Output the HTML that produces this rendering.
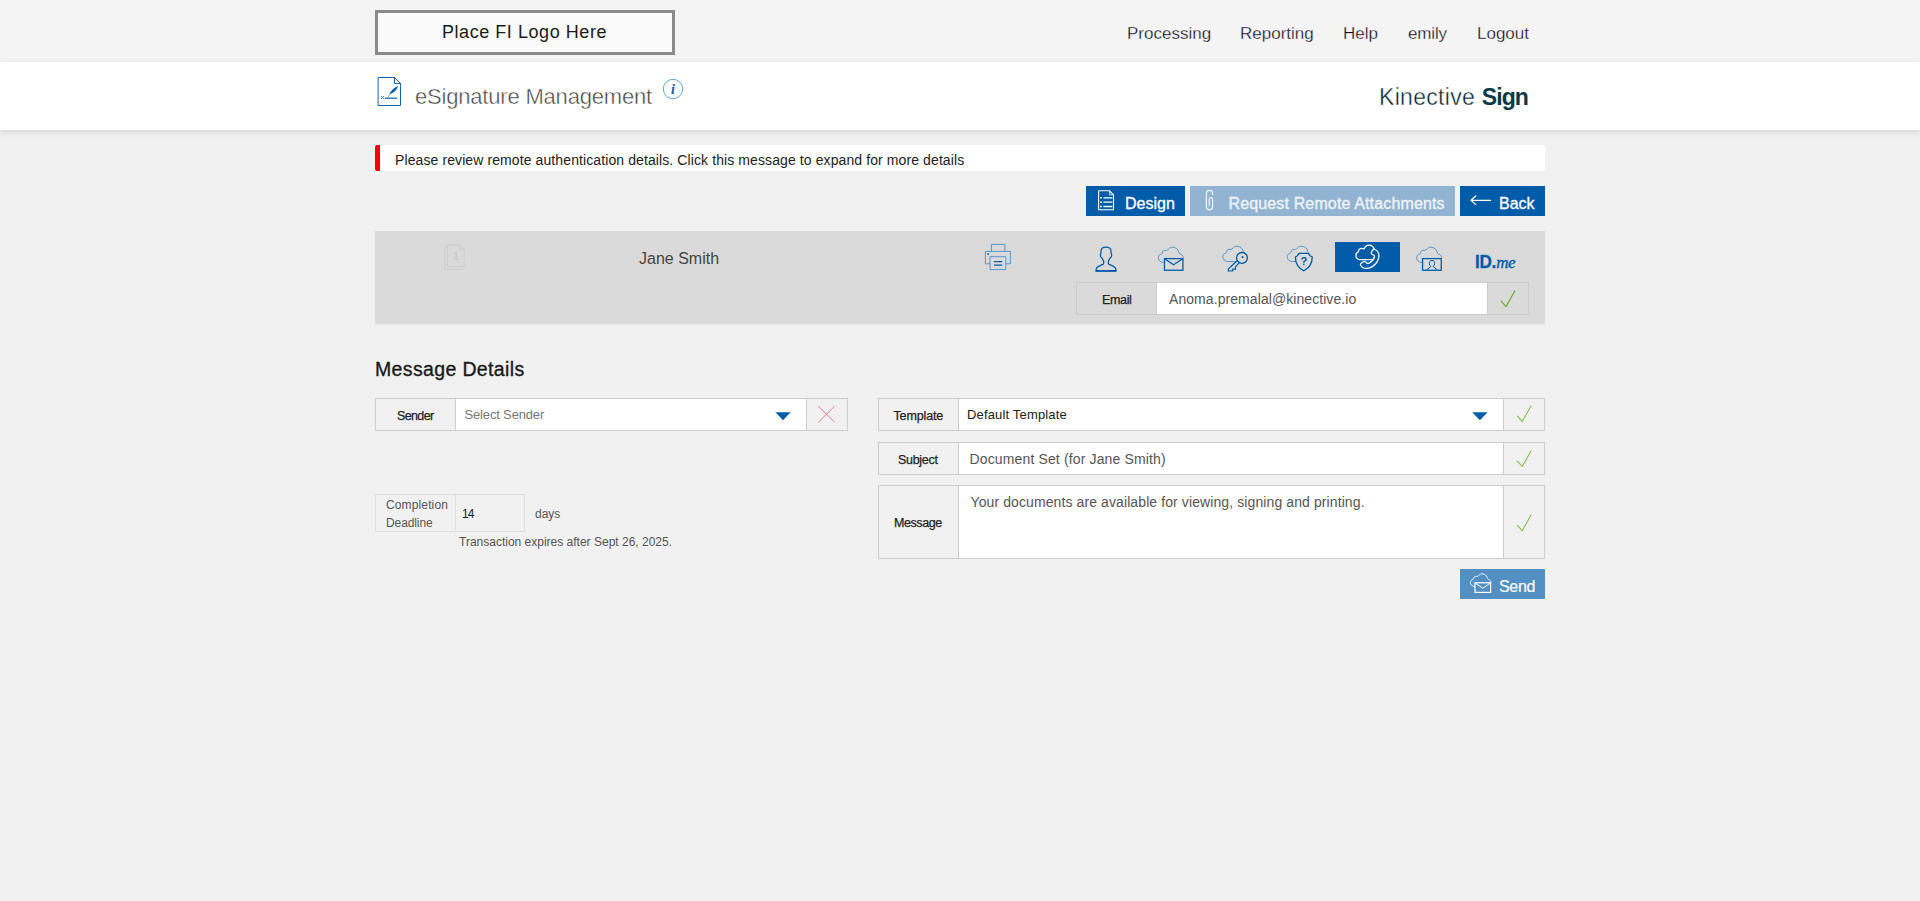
<!DOCTYPE html>
<html lang="en">
<head>
<meta charset="utf-8">
<title>eSignature Management</title>
<style>
*{box-sizing:border-box;margin:0;padding:0}
html,body{width:1920px;height:901px;overflow:hidden}
body{background:#f1f1f1;font-family:"Liberation Sans",Arial,sans-serif;color:#222;position:relative}
.t{position:absolute;white-space:nowrap;line-height:1}
svg{position:absolute;overflow:visible}
#topbar{position:absolute;left:0;top:0;width:1920px;height:62px;background:#f4f4f4}
#logo{position:absolute;left:375px;top:10px;width:300px;height:45px;border:3px solid #8a8a8a;background:#fafafa}
.nav{font-size:17px;color:#0e0616;top:24.6px;-webkit-text-stroke:.3px #f4f4f4}
#band{position:absolute;left:0;top:62px;width:1920px;height:68px;background:#fff;box-shadow:0 2px 6px rgba(0,0,0,.12)}
#alert{position:absolute;left:375px;top:145px;width:1170px;height:26px;background:#fff;border-left:5px solid #f00;border-radius:2px}
.btn{position:absolute;height:30px;background:#005ca8}
.btn.dis{background:#92b4d2}
.bt{font-size:16px;color:#fff;-webkit-text-stroke:.3px #fff}
#panel{position:absolute;left:375px;top:231px;width:1170px;height:92px;background:#dadada;box-shadow:0 1px 0 #dedede,0 2px 0 #e9e9e9}
.box{position:absolute;border:1px solid #ccc;background:#f1f1f1}
.box.w{background:#fff}
.lb{font-size:12.5px;color:#222;-webkit-text-stroke:.25px #222}
.v14{font-size:14px;color:#555}
</style>
</head>
<body>
<!-- top bar -->
<div id="topbar"></div>
<div id="logo"></div>
<div class="t" id="t_logo" style="left:442px;top:23.4px;font-size:18px;color:#1a1a1a;letter-spacing:.55px">Place FI Logo Here</div>
<div class="t nav" id="t_proc" style="left:1127px">Processing</div>
<div class="t nav" id="t_rep" style="left:1240px">Reporting</div>
<div class="t nav" id="t_help" style="left:1343px">Help</div>
<div class="t nav" id="t_emily" style="left:1408px;letter-spacing:-.15px">emily</div>
<div class="t nav" id="t_logout" style="left:1477px">Logout</div>

<!-- title band -->
<div id="band"></div>
<div class="t" id="t_title" style="left:415px;top:86px;font-size:22px;color:#404040;-webkit-text-stroke:.45px #fff;letter-spacing:-.19px">eSignature Management</div>
<svg id="i_info" style="left:662px;top:78px" width="22" height="22" viewBox="0 0 22 22"><circle cx="11" cy="11" r="9.7" fill="none" stroke="#3f8fd0" stroke-width=".8"/><text x="11" y="16" text-anchor="middle" font-family="Liberation Serif,serif" font-style="italic" font-weight="bold" font-size="14" fill="#005ca8">i</text></svg>
<div class="t" id="t_brand" style="left:1379px;top:86px;font-size:23px;color:#0b3a45;letter-spacing:.3px"><span style="color:#00202a;-webkit-text-stroke:.4px #fff">Kinective</span> <b id="t_sign" style="letter-spacing:-.9px">Sign</b></div>

<!-- alert -->
<div id="alert"></div>
<div class="t" id="t_alert" style="left:395px;top:153px;font-size:14px;color:#222;letter-spacing:.1px">Please review remote authentication details. Click this message to expand for more details</div>

<!-- buttons -->
<div class="btn" style="left:1086px;top:186px;width:99px"></div>
<div class="t bt" id="t_design" style="left:1125px;top:195.5px">Design</div>
<div class="btn dis" style="left:1190px;top:186px;width:265px"></div>
<div class="t bt" id="t_req" style="left:1228.5px;top:195.5px;color:#f1f4f8;-webkit-text-stroke-color:#f1f4f8;letter-spacing:.14px">Request Remote Attachments</div>
<div class="btn" style="left:1460px;top:186px;width:85px"></div>
<div class="t bt" id="t_back" style="left:1499px;top:195.5px">Back</div>

<!-- signer panel -->
<div id="panel"></div>
<div class="t" id="t_jane" style="left:639px;top:251px;font-size:16px;color:#444">Jane Smith</div>
<div class="btn" style="left:1335px;top:242px;width:65px"></div>
<div class="t" id="t_idme" style="left:1475.4px;top:251.6px;font-size:19px;color:#005ca8;width:60px"><b style="display:inline-block;transform:scaleX(.9);transform-origin:0 50%;letter-spacing:-.4px;-webkit-text-stroke:.3px #005ca8">ID.</b><i style="font-family:'Liberation Serif',serif;font-size:17px;letter-spacing:-.5px;-webkit-text-stroke:.35px #005ca8;margin-left:-2.3px">me</i></div>

<div class="box" style="left:1076px;top:282px;width:82px;height:33px;background:#dadada"></div>
<div class="box w" style="left:1156px;top:282px;width:332px;height:33px"></div>
<div class="box" style="left:1487px;top:282px;width:42px;height:33px;background:#dadada"></div>
<div class="t lb" id="t_email" style="left:1102px;top:293.5px;letter-spacing:-.35px">Email</div>
<div class="t v14" id="t_emailv" style="left:1169px;top:292px;letter-spacing:.07px">Anoma.premalal@kinective.io</div>

<!-- message details -->
<div class="t" id="t_md" style="left:375px;top:360px;font-size:19.5px;color:#1a1a1a;-webkit-text-stroke:.35px #1a1a1a;letter-spacing:.36px">Message Details</div>

<div class="box" style="left:375px;top:398px;width:82px;height:33px"></div>
<div class="box w" style="left:455px;top:398px;width:352px;height:33px"></div>
<div class="box" style="left:806px;top:398px;width:42px;height:33px"></div>
<div class="t lb" id="t_sender" style="left:397px;top:409.5px;letter-spacing:-.64px">Sender</div>
<div class="t" id="t_selsender" style="left:464.5px;top:408px;font-size:13px;color:#777;letter-spacing:-.16px">Select Sender</div>

<div class="box" style="left:878px;top:398px;width:82px;height:33px"></div>
<div class="box w" style="left:958px;top:398px;width:546px;height:33px"></div>
<div class="box" style="left:1503px;top:398px;width:42px;height:33px"></div>
<div class="t lb" id="t_tmpl" style="left:893.5px;top:409.5px;letter-spacing:-.14px">Template</div>
<div class="t" id="t_deft" style="left:967px;top:408px;font-size:13px;color:#222;letter-spacing:.16px">Default Template</div>

<div class="box" style="left:878px;top:442px;width:82px;height:33px"></div>
<div class="box w" style="left:958px;top:442px;width:546px;height:33px"></div>
<div class="box" style="left:1503px;top:442px;width:42px;height:33px"></div>
<div class="t lb" id="t_subj" style="left:898px;top:453.5px;letter-spacing:-.3px">Subject</div>
<div class="t v14" id="t_subjv" style="left:969.5px;top:452px;letter-spacing:.14px">Document Set (for Jane Smith)</div>

<div class="box" style="left:878px;top:485px;width:82px;height:74px"></div>
<div class="box w" style="left:958px;top:485px;width:546px;height:74px"></div>
<div class="box" style="left:1503px;top:485px;width:42px;height:74px"></div>
<div class="t lb" id="t_msg" style="left:894px;top:516.5px;letter-spacing:-.43px">Message</div>
<div class="t v14" id="t_msgv" style="left:970.5px;top:495px;letter-spacing:.1px">Your documents are available for viewing, signing and printing.</div>

<div class="box" style="left:375px;top:494px;width:82px;height:38px;border-color:#dedede"></div>
<div class="box" style="left:455px;top:494px;width:70px;height:38px;border-color:#dedede"></div>
<div class="t" id="t_comp" style="left:386px;top:499px;font-size:12px;color:#555;letter-spacing:.13px">Completion</div>
<div class="t" id="t_dead" style="left:386px;top:517px;font-size:12px;color:#555;letter-spacing:-.1px">Deadline</div>
<div class="t" id="t_14" style="left:462px;top:508px;font-size:12px;color:#222;letter-spacing:-1px">14</div>
<div class="t" id="t_days" style="left:535px;top:508px;font-size:12px;color:#555">days</div>
<div class="t" id="t_trans" style="left:459px;top:536px;font-size:12px;color:#555">Transaction expires after Sept 26, 2025.</div>

<div class="btn" style="left:1460px;top:569px;width:85px;background:#5290c3"></div>
<div class="t bt" id="t_send" style="left:1499px;top:578.5px;-webkit-text-stroke-width:.15px;letter-spacing:-.3px">Send</div>

<!--ICONS-START-->
<svg id="icons" style="left:0;top:0" width="1920" height="901" viewBox="0 0 1920 901" fill="none" stroke-linecap="round" stroke-linejoin="round">
<defs>
<path id="cloud" d="M5.2,16.5 C2.4,16.3 .4,14.4 .4,11.9 C.4,9.8 1.8,8.3 3.6,7.9 C4.3,7.7 4.4,7.2 4.4,6.6 C4.4,5.2 5.4,4.4 6.6,4.4 H8.6 C9.4,4.4 9.8,3.8 10.6,3 C11.6,1.9 13,1.2 14.5,1.2 C17.6,1.2 20.2,3.2 20.7,6 C20.8,6.8 21,7.3 21.8,7.7 C23.6,8.5 25,9.6 25.4,11.1"/>
<path id="cloudb" d="M12,16.5 H5.2 C2.4,16.3 .4,14.4 .4,11.9 C.4,9.8 1.8,8.3 3.6,7.9 C4.3,7.7 4.4,7.2 4.4,6.6 C4.4,5.2 5.4,4.4 6.6,4.4 H8.6 C9.4,4.4 9.8,3.8 10.6,3 C11.6,1.9 13,1.2 14.5,1.2 C17.6,1.2 20.2,3.2 20.7,6 C20.8,6.8 21,7.3 21.8,7.7"/>
<path id="chk" d="M0,10.2 L4.8,15.6 L13.6,0"/>
</defs>
<!-- title doc icon -->
<g stroke="#1565b5" stroke-width="1" stroke-linejoin="miter">
<path d="M378.5,77.5 H394.5 L400.5,83.5 V105.5 H378.5 Z" fill="#fff"/>
<path d="M394.5,77.5 V83.5 H400.5"/>
</g>
<path d="M389.6,94.4 C390.2,91.6 393.6,88 398,86.1 C397,89.8 393.4,93.4 389.6,94.4 Z" fill="#005ca8"/>
<path d="M388.2,96.9 L390,94" stroke="#2f7ec4" stroke-width=".6"/>
<path d="M385,98.2 H397" stroke="#005ca8" stroke-width="1.2" stroke-linecap="butt"/>
<path d="M381.2,96.3 l2.6,2.4 m0,-2.4 l-2.6,2.4" stroke="#1565b5" stroke-width=".8"/>

<!-- design icon -->
<g stroke="#fff" stroke-width="1.1">
<path d="M1098.6,190.8 H1109.6 L1113.5,194.8 V209.8 H1098.6 Z"/>
<path d="M1109.6,190.8 V194.8 H1113.5" stroke-width=".8"/>
<path d="M1103.4,197.8 H1112.4 M1103.4,202.2 H1112.4 M1103.4,206.5 H1112.4" stroke-width="1.3" stroke-linecap="butt"/>
<path d="M1100.1,197.8 H1101.9 M1100.1,202.2 H1101.9 M1100.1,206.5 H1101.9" stroke-width="1.6" stroke-linecap="butt"/>
</g>
<!-- paperclip -->
<path d="M1212.6,194.6 V193.4 C1212.6,189.3 1206.4,189.3 1206.4,193.4 V206.8 C1206.4,210.9 1212.6,210.9 1212.6,206.8 V199.4 C1212.6,197 1209.2,197 1209.2,199.4 V205.6" stroke="#f2f5f8" stroke-width="1.2"/>
<!-- back arrow -->
<path d="M1471,200.3 H1490.6 M1475.8,196 L1471,200.3 L1475.8,204.6" stroke="#fff" stroke-width="1.2"/>

<!-- ghost docs -->
<g stroke="#cdcdcd" stroke-width="1">
<path d="M447.5,247.5 H444.9 V269.3 H462.2 V266.7"/>
<path d="M447.9,244.9 H459.6 L464.3,249.6 V266.4 H447.9 Z"/>
<path d="M459.6,244.9 V249.6 H464.3"/>
</g>
<!-- printer -->
<g stroke="#3a86c8" stroke-width=".8">
<path d="M991.4,251.3 V244.4 H1004.9 V251.3"/>
<path d="M990.4,263.8 H985.4 V251.4 H1010.4 V263.8 H1005.8"/>
<path d="M990.4,256.7 H1005.8 V269.6 H990.4 Z" fill="#dadada"/>
</g>
<path d="M994,261.6 H1002.2 M994,265.1 H1002.2" stroke="#005ca8" stroke-width="1.3" stroke-linecap="butt"/>
<rect x="987.3" y="253.2" width="1.6" height="1.6" fill="#005ca8"/>
<!-- person -->
<path d="M1106,247.2 C1109,247.2 1111,248.6 1111.05,251.3 V253.4 C1111.5,254 1111.7,254.8 1111.6,255.5 C1111.5,256.4 1111.2,256.8 1111,257.1 C1110.6,257.6 1110.2,258 1109.9,258.3 C1109.3,259.4 1108.8,260.4 1108.3,261.4 V263.3 C1108.4,264 1109,264.4 1109.9,264.7 L1113.8,266.6 C1115,267.2 1115.6,268 1115.7,268.8 L1115.9,270.8 H1096.1 L1096.3,268.8 C1096.4,268 1097,267.2 1098.2,266.6 L1102.1,264.7 C1103,264.4 1103.6,264 1103.7,263.3 V261.4 C1103.2,260.4 1102.7,259.4 1102.1,258.3 C1101.8,258 1101.4,257.6 1101,257.1 C1100.8,256.8 1100.5,256.4 1100.4,255.5 C1100.3,254.8 1100.5,254 1100.95,253.4 V251.3 C1101,248.6 1103,247.2 1106,247.2 Z" stroke="#005ca8" stroke-width="1.3"/>
<path d="M1096.1,270.9 H1115.9" stroke="#005ca8" stroke-width="1.6"/>
<!-- cloud mail -->
<use href="#cloud" x="1158" y="246" stroke="#2f7ec4" stroke-width=".75"/>
<g stroke="#005ca8" stroke-width="1.3" stroke-linejoin="miter">
<rect x="1164.45" y="258.6" width="18.5" height="11.65"/>
<path d="M1164.6,258.8 L1173.6,264.7 L1182.8,258.8" stroke-width="1.2"/>
</g>
<!-- cloud key -->
<use href="#cloudb" x="1222.4" y="245" stroke="#2f7ec4" stroke-width=".75"/>
<circle cx="1242" cy="257.9" r="5.4" fill="#dadada" stroke="#005ca8" stroke-width="1.3"/>
<circle cx="1242.6" cy="257.1" r="1.05" fill="#005ca8"/>
<path d="M1237,260.8 L1228.3,269 V271 H1232.8 V269.1 H1235.5 V266.9 L1239.3,262.6" stroke="#005ca8" stroke-width="1.2" stroke-linejoin="miter"/>
<!-- cloud shield -->
<use href="#cloudb" x="1286.8" y="245" stroke="#2f7ec4" stroke-width=".75"/>
<path d="M1299,253.3 H1308.4 C1309.2,255.2 1310.6,256.4 1312.2,256.8 C1312.4,262.6 1309.6,267.6 1303.7,270.8 C1297.8,267.6 1295.2,262.6 1295.5,256.8 C1297,256.4 1298.3,255.2 1299,253.3 Z" fill="#dadada" stroke="#005ca8" stroke-width="1.3"/>
<!-- cloud phone (active) -->
<g stroke="#fff" stroke-width="1.3">
<path d="M1372.4,259.6 H1359.6 C1357.4,259.6 1356,257.6 1356,255.6 C1356,253.8 1357,252.4 1358.4,251.9 C1358.2,250 1359.8,248.2 1361.8,248.4 C1362.6,248.4 1363.4,248.6 1364,249 C1364.8,246.8 1366.8,245.2 1369.2,245.2 C1371.4,245.2 1373.2,246.6 1373.9,248.6"/>
<path d="M1374,249 C1376.8,250 1378.9,252.6 1378.9,255.6 C1378.9,262.4 1372.6,268.4 1366.4,268.4 C1363.8,268.4 1361.6,267 1360.6,265.2 C1360.2,264.4 1360.6,263.6 1361.4,263 L1363.6,261.6 C1364.2,261.2 1365,261.3 1365.5,261.8 L1366.8,263 C1367.4,263.6 1368.2,263.6 1369,263.2 C1371.6,261.8 1373.6,259.6 1374.4,257 C1374.6,256.2 1374.4,255.6 1373.8,255.2 L1372,254.2 C1371.4,253.8 1371.2,253.2 1371.4,252.4 C1371.8,251.2 1372.6,250 1373.4,249.2 C1373.6,249 1373.8,249 1374,249 Z"/>
</g>
<!-- cloud video -->
<use href="#cloud" x="1416.3" y="246" stroke="#2f7ec4" stroke-width=".75"/>
<rect x="1422.55" y="258.6" width="18.7" height="11.65" fill="#dadada" stroke="#005ca8" stroke-width="1.3" stroke-linejoin="miter"/>
<path d="M1432,260.5 C1433.9,260.5 1434.8,261.8 1434.7,263.3 C1434.6,264.7 1434,265.8 1433.2,266.6 L1437.4,269.9 M1426.6,269.9 L1430.8,266.6 C1430,265.8 1429.4,264.7 1429.3,263.3 C1429.2,261.8 1430.1,260.5 1432,260.5" stroke="#005ca8" stroke-width="1"/>

<!-- checks -->
<use href="#chk" x="1501.2" y="291" stroke="#6fae2f" stroke-width="1.2"/>
<use href="#chk" x="1517.4" y="406" stroke="#8db948" stroke-width="1.1"/>
<use href="#chk" x="1517.4" y="450.9" stroke="#8db948" stroke-width="1.1"/>
<use href="#chk" x="1517.4" y="515.1" stroke="#8db948" stroke-width="1.1"/>
<!-- X -->
<path d="M818.6,406.4 L834.4,422 M834.4,406.4 L818.6,422" stroke="#e0788a" stroke-width="1"/>
<!-- triangles -->
<path d="M775.4,412.2 H790.6 L783,420.2 Z" fill="#005ca8"/>
<path d="M1472.2,412.2 H1487.6 L1479.9,420.2 Z" fill="#005ca8"/>
<!-- send icon -->
<g transform="translate(1470,572.8) scale(.83)"><use href="#cloud" stroke="#fff" stroke-width="1"/></g>
<g stroke="#fff" stroke-width="1.2" stroke-linejoin="miter">
<rect x="1475" y="582.8" width="15.6" height="9.6" fill="#5290c3"/>
<path d="M1475.2,583 L1482.8,588.2 L1490.4,583" stroke-width="1"/>
</g>
</svg>
<div class="t" id="t_g1" style="left:453px;top:251px;font-size:11px;font-weight:bold;color:#cbcbcb">1</div>
<div class="t" id="t_q" style="left:1300.6px;top:256px;font-size:11px;font-weight:bold;color:#005ca8">?</div>
<!--ICONS-END-->
</body>
</html>
